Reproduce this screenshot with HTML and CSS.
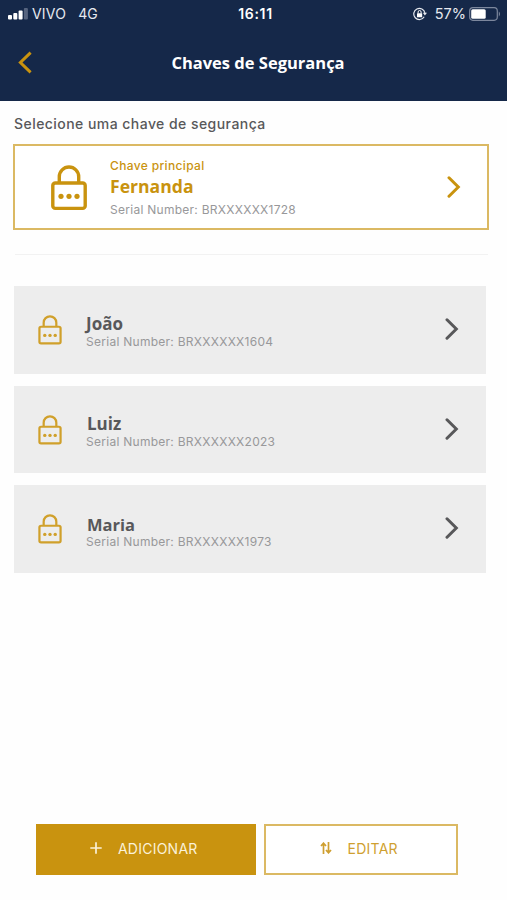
FILE: index.html
```html
<!DOCTYPE html>
<html lang="pt-BR">
<head>
    <meta charset="UTF-8">
    <meta name="viewport" content="width=device-width, initial-scale=1.0">
    <title>Chaves de Segurança</title>
    <link rel="stylesheet" href="styles.css">
</head>
<body>
    <!-- Shared icons -->
    <svg class="sprite" aria-hidden="true">
        <symbol id="lock" viewBox="0 0 36 46">
            <rect x="1.8" y="18" width="32.4" height="25.4" rx="2.5" fill="none" stroke="currentColor" stroke-width="3.4"/>
            <path d="M8.3 18V11.7a9.7 9.7 0 0 1 19.4 0V18" fill="none" stroke="currentColor" stroke-width="3.4"/>
            <circle cx="10" cy="31.3" r="2.6" fill="currentColor"/>
            <circle cx="18" cy="31.3" r="2.6" fill="currentColor"/>
            <circle cx="26" cy="31.3" r="2.6" fill="currentColor"/>
        </symbol>
        <symbol id="chevron" viewBox="0 0 14 22">
            <path d="M2 1.8L11.3 11L2 20.2" fill="none" stroke="currentColor" stroke-width="3" stroke-linecap="round"/>
        </symbol>
    </svg>

    <header class="header">
        <div class="status-bar">
            <div class="status-left">
                <svg class="signal" viewBox="0 0 20 12">
                    <rect x="0" y="7" width="4" height="4.5" rx="1" fill="#fff"/>
                    <rect x="5.3" y="5" width="4" height="6.5" rx="1" fill="#fff"/>
                    <rect x="10.6" y="2.5" width="4" height="9" rx="1" fill="#fff"/>
                    <rect x="15.9" y="0" width="4" height="11.5" rx="1" fill="#56647f"/>
                </svg>
                <span class="carrier">VIVO</span>
                <span class="network">4G</span>
            </div>
            <span class="clock">16:11</span>
            <div class="status-right">
                <svg class="rotation" viewBox="0 0 14 14">
                    <path d="M11.2 9.8A5.6 5.6 0 1 1 11.9 6" fill="none" stroke="#e6e9ef" stroke-width="1.2"/>
                    <path d="M9.8 5.8h4.2l-2.1 2.8z" fill="#e6e9ef"/>
                    <rect x="4" y="6.2" width="5.2" height="4" rx=".5" fill="#fff"/>
                    <path d="M5.1 6.5V5a1.5 1.5 0 0 1 3 0v1.5" fill="none" stroke="#fff" stroke-width="1"/>
                </svg>
                <span class="percent">57%</span>
                <svg class="battery" viewBox="0 0 32 14">
                    <rect x=".7" y=".7" width="27.6" height="12.6" rx="3.2" fill="none" stroke="#7c879d" stroke-width="1.2"/>
                    <rect x="2.2" y="2.2" width="14.5" height="9.6" rx="1.5" fill="#fff"/>
                    <path d="M29.8 4.6c1.5.7 1.5 4.1 0 4.8z" fill="#7c879d"/>
                </svg>
            </div>
        </div>
        <div class="nav-bar">
            <svg class="back" viewBox="0 0 14 22">
                <path d="M12.6 1.2L2.4 11L12.6 20.8" fill="none" stroke="currentColor" stroke-width="3"/>
            </svg>
            <h1>Chaves de Segurança</h1>
        </div>
    </header>

    <main class="content">
        <p class="label">Selecione uma chave de segurança</p>

        <div class="main-key">
            <svg class="lock-big"><use href="#lock"/></svg>
            <div class="info">
                <span class="tag">Chave principal</span>
                <span class="name">Fernanda</span>
                <span class="serial">Serial Number: BRXXXXXX1728</span>
            </div>
            <svg class="chevron"><use href="#chevron"/></svg>
        </div>

        <hr>

        <div class="key-list">
            <div class="key">
                <svg class="lock"><use href="#lock"/></svg>
                <div class="info">
                    <span class="name">João</span>
                    <span class="serial">Serial Number: BRXXXXXX1604</span>
                </div>
                <svg class="chevron"><use href="#chevron"/></svg>
            </div>
            <div class="key">
                <svg class="lock"><use href="#lock"/></svg>
                <div class="info">
                    <span class="name indent">Luiz</span>
                    <span class="serial">Serial Number: BRXXXXXX2023</span>
                </div>
                <svg class="chevron"><use href="#chevron"/></svg>
            </div>
            <div class="key">
                <svg class="lock"><use href="#lock"/></svg>
                <div class="info">
                    <span class="name indent low">Maria</span>
                    <span class="serial">Serial Number: BRXXXXXX1973</span>
                </div>
                <svg class="chevron"><use href="#chevron"/></svg>
            </div>
        </div>
    </main>

    <footer class="actions">
        <button class="btn btn-add">
            <svg viewBox="0 0 12 12"><path d="M6 .3v11.4M.3 6h11.4" stroke="currentColor" stroke-width="1.7"/></svg>
            ADICIONAR
        </button>
        <button class="btn btn-edit">
            <svg viewBox="0 0 12 12"><path d="M3.5 12V1.5M1 4L3.5 1.2L6 4M8.5 0v10.5M6 8l2.5 2.8L11 8" fill="none" stroke="currentColor" stroke-width="1.7"/></svg>
            EDITAR
        </button>
    </footer>
</body>
</html>
```

FILE: styles.css
```css
* {
    box-sizing: border-box;
}

body {
    margin: 0;
    height: 900px;
    display: flex;
    flex-direction: column;
    overflow: hidden;
    background-color: #fefefe;
    font-family: "Inter", "Liberation Sans", sans-serif;
    color: #58585a;
}

svg {
    display: block;
    flex: none;
}

.sprite {
    display: none;
}

/* Header */
.header {
    height: 101px;
    background-color: #152849;
    color: #fff;
}

.status-bar {
    height: 28px;
    padding: 0 6px 0 8px;
    display: grid;
    grid-template-columns: 1fr auto 1fr;
    align-items: center;
    font-size: 14px;
    line-height: 28px;
    color: #e6e9ef;
}

.status-left,
.status-right {
    display: flex;
    align-items: center;
}

.status-right {
    justify-content: flex-end;
}

.signal {
    width: 20px;
    height: 12px;
    margin-right: 4px;
}

.carrier {
    letter-spacing: 0.2px;
}

.network {
    margin-left: 12px;
}

.clock {
    padding-left: 2px;
    font-weight: 600;
    letter-spacing: 0.7px;
    color: #fff;
}

.rotation {
    width: 14px;
    height: 14px;
    margin-right: 8px;
}

.percent {
    font-size: 14.5px;
}

.battery {
    width: 32px;
    height: 14px;
    margin-left: 3px;
}

.nav-bar {
    height: 68px;
    padding: 0 18px;
    display: grid;
    grid-template-columns: 14px 1fr 14px;
    align-items: center;
}

.back {
    width: 14px;
    height: 23px;
    color: #c9930f;
}

h1 {
    margin: 1px 0 0 9px;
    text-align: center;
    font-family: "Open Sans", "Noto Sans", sans-serif;
    font-size: 16.5px;
    font-weight: 700;
    line-height: 24px;
}

/* Keys */
.content {
    flex: 1;
    padding: 13px 18px 0 13px;
}

.label {
    margin: 0 0 10px 1px;
    font-size: 14px;
    font-weight: 500;
    line-height: 20px;
    letter-spacing: 0.45px;
}

.main-key {
    height: 86px;
    padding: 0 26px 0 36px;
    display: flex;
    align-items: center;
    border: 2px solid #dbb963;
    background-color: #fff;
    color: #c9930f;
}

.info {
    flex: 1;
    display: flex;
    flex-direction: column;
}

.name {
    font-family: "Open Sans", "Noto Sans", sans-serif;
    font-size: 17px;
    font-weight: 700;
    line-height: 20px;
}

.serial {
    font-size: 12px;
    line-height: 16px;
    letter-spacing: 0.27px;
    color: #98989a;
}

.lock-big {
    width: 36px;
    height: 46px;
    margin: 1px 23px 0 0;
}

.chevron {
    width: 14px;
    height: 22px;
}

.main-key .tag {
    font-size: 12px;
    font-weight: 500;
    line-height: 16px;
    letter-spacing: 0.35px;
}

.main-key .info {
    padding-top: 2px;
}

.main-key .name {
    margin: 1px 0 5px;
    font-size: 17.6px;
    line-height: 22px;
}

hr {
    height: 1px;
    margin: 24px 1px 31px 2px;
    border: 0;
    background-color: #f2f2f2;
}

.key-list {
    margin: 0 3px 0 1px;
    display: flex;
    flex-direction: column;
    gap: 12px;
}

.key {
    height: 87.7px;
    padding: 0 27px 0 24px;
    display: flex;
    align-items: center;
    background-color: #ededed;
}

.lock {
    width: 24px;
    height: 30px;
    margin-right: 24px;
    color: #d0a02b;
}

.key .info {
    padding-top: 5px;
}

.key .chevron {
    margin-bottom: 2px;
}

.indent {
    margin-left: 1px;
}

/* sits closer to the serial number */
.low {
    margin-top: 1px;
    margin-bottom: -1px;
    font-size: 16.5px;
}

/* Bottom buttons */
.actions {
    height: 77px;
    padding: 0.5px 49px 0 36px;
    display: flex;
    align-items: flex-start;
    gap: 8px;
}

.btn {
    height: 51px;
    padding: 0 5px 2px 0;
    display: flex;
    align-items: center;
    justify-content: center;
    gap: 16px;
    font-family: inherit;
    font-size: 14px;
    letter-spacing: 0.25px;
    border: 2px solid #c9930f;
}

.btn svg {
    width: 12px;
    height: 12px;
}

.btn-add {
    width: 221px;
    background-color: #c9930f;
    color: #fbf1d8;
}

.btn-edit {
    width: 194px;
    background-color: #fff;
    border-color: #dbb963;
    color: #cf9f30;
}
```
